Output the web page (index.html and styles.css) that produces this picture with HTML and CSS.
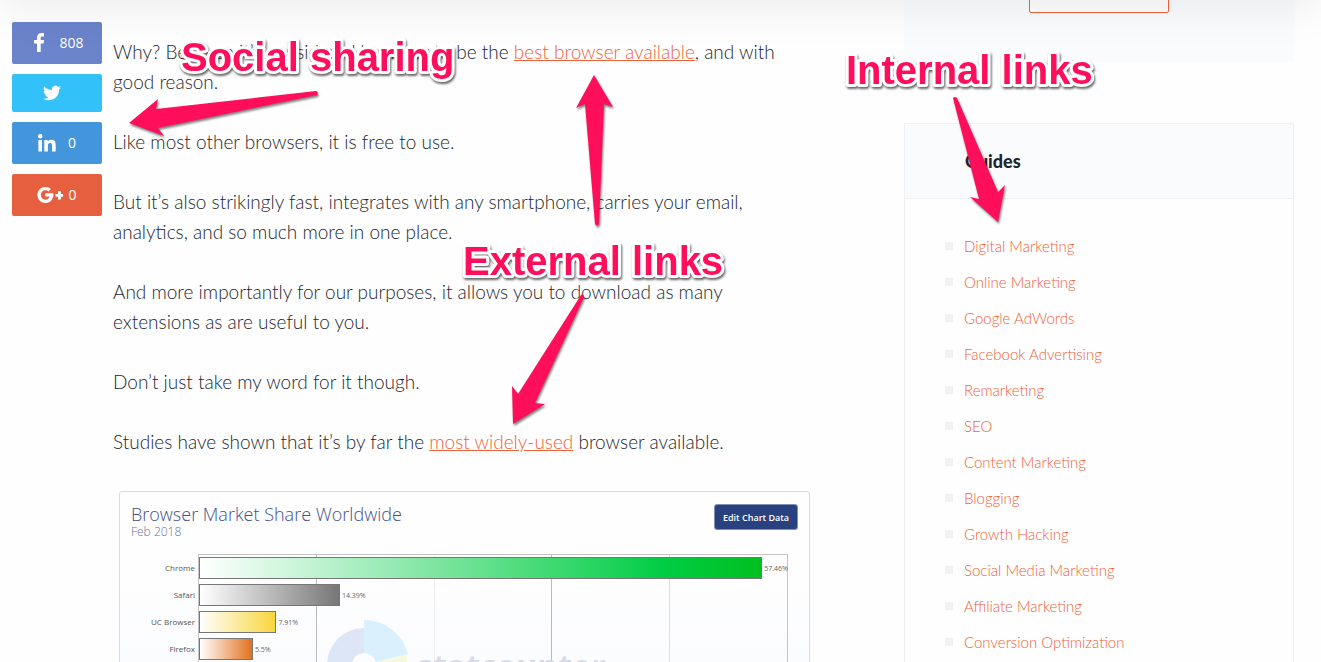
FILE: index.html
```html
<!DOCTYPE html>
<html lang="en">
<head>
    <meta charset="UTF-8">
    <title>Guides</title>
    <link rel="stylesheet" href="styles.css">
</head>
<body>
    <div class="page">
        <header class="topbar"></header>
        <nav class="share" aria-label="Share">
            <a class="share-btn facebook" href="#">
                <svg width="10" height="19" viewBox="0 0 10 19"><path d="M3 19V10.500H0V7H3V4.800C3 1.600 4.700 0 7.600 0H10V3.400H8.300C7 3.400 6.700 4 6.700 5V7H10L9.600 10.500H6.700V19Z"/></svg>
                <span>808</span>
            </a>
            <a class="share-btn twitter" href="#" aria-label="Twitter">
                <svg width="18" height="18" viewBox="0 0 24 24"><path d="M24 4.600a10 10 0 0 1-2.800.8 5 5 0 0 0 2.200-2.700c-1 .6-2 1-3.100 1.200a4.900 4.900 0 0 0-8.400 4.500A14 14 0 0 1 1.700 3.100a4.900 4.900 0 0 0 1.500 6.600 5 5 0 0 1-2.200-.6v.1a4.900 4.900 0 0 0 3.900 4.800 5 5 0 0 1-2.200.1 4.900 4.900 0 0 0 4.600 3.400A9.900 9.900 0 0 1 0 19.500a14 14 0 0 0 7.500 2.200c9.100 0 14.300-7.700 14-14.600A10 10 0 0 0 24 4.600z"/></svg>
            </a>
            <a class="share-btn linkedin" href="#">
                <svg width="18" height="18" viewBox="0 0 18 18"><circle cx="2.200" cy="2.200" r="2.200"/><path d="M.4 6H4V17.500H.4ZM6.300 6H9.700V7.600C10.300 6.500 11.600 5.700 13.300 5.700C17 5.700 17.700 8.100 17.700 11.200V17.500H14V11.900C14 10.500 14 8.900 12.100 8.900C10.200 8.900 9.900 10.300 9.900 11.800V17.500H6.300Z"/></svg>
                <span>0</span>
            </a>
            <a class="share-btn google" href="#">
                <svg width="26" height="18" viewBox="0 0 26 18"><path d="M8.500 7.300H16.300C17 12.500 14 17 8.500 17C4 17 .4 13.500 .4 9C.4 4.500 4 1 8.500 1C10.700 1 12.500 1.800 13.900 3.100L11.500 5.400C10.700 4.700 9.800 4.300 8.500 4.300C5.900 4.300 3.900 6.400 3.900 9C3.900 11.600 5.900 13.700 8.500 13.700C10.800 13.700 12.200 12.400 12.600 10.500H8.500ZM21 5.300H23.800V8H26V10.800H23.800V13.500H21V10.800H18.500V8H21Z"/></svg>
                <span>0</span>
            </a>
        </nav>
        <main class="article">
            <p>Why? Because it’s considered by many to be the <a href="#">best browser available</a>, and with good reason.</p>
            <p>Like most other browsers, it is free to use.</p>
            <p>But it’s also strikingly fast, integrates with any smartphone, carries your email, analytics, and so much more in one place.</p>
            <p>And more importantly for our purposes, it allows you to download as many extensions as are useful to you.</p>
            <p>Don’t just take my word for it though.</p>
            <p>Studies have shown that it’s by far the <a href="#">most widely-used</a> browser available.</p>
            <figure class="chart">
                <div class="chart-head">
                    <div>
                        <h2>Browser Market Share Worldwide</h2>
                        <div class="date">Feb 2018</div>
                    </div>
                    <button type="button">Edit Chart Data</button>
                </div>
                <div class="chart-body">
                    <div class="labels">
                        <span>Chrome</span>
                        <span>Safari</span>
                        <span>UC Browser</span>
                        <span>Firefox</span>
                    </div>
                    <div class="plot">
                        <div class="watermark">
                            <svg width="90" height="90" viewBox="-45 -45 90 90">
                                <path fill="#dce6f6" d="M0 0V-37A37 37 0 0 0 0 37Z"/>
                                <path fill="#daf1fd" d="M0 0V-45A45 45 0 0 1 44 -11Z"/>
                                <path fill="#f6f8dc" d="M0 0L42 -10A43 43 0 0 1 0 43Z"/>
                                <circle r="12" fill="#fcfdff"/>
                            </svg>
                            <span>statcounter</span>
                        </div>
                        <div class="row"><div class="bar chrome" style="width:95.77%"></div><span>57.46%</span></div>
                        <div class="row"><div class="bar safari" style="width:23.98%"></div><span>14.39%</span></div>
                        <div class="row"><div class="bar uc" style="width:13.18%"></div><span>7.91%</span></div>
                        <div class="row"><div class="bar firefox" style="width:9.17%"></div><span>5.5%</span></div>
                    </div>
                </div>
            </figure>
        </main>
        <aside class="sidebar">
            <div class="promo"><a href="#" aria-label="Read more"></a></div>
            <section class="guides">
                <h3>Guides</h3>
                <ul>
                    <li><a href="#">Digital Marketing</a></li>
                    <li><a href="#">Online Marketing</a></li>
                    <li><a href="#">Google AdWords</a></li>
                    <li><a href="#">Facebook Advertising</a></li>
                    <li><a href="#">Remarketing</a></li>
                    <li><a href="#">SEO</a></li>
                    <li><a href="#">Content Marketing</a></li>
                    <li><a href="#">Blogging</a></li>
                    <li><a href="#">Growth Hacking</a></li>
                    <li><a href="#">Social Media Marketing</a></li>
                    <li><a href="#">Affiliate Marketing</a></li>
                    <li><a href="#">Conversion Optimization</a></li>
                </ul>
            </section>
        </aside>
        <!-- callouts drawn over the page -->
        <svg class="notes" width="1321" height="662" viewBox="0 0 1321 662">
            <g class="arrows">
                <path d="M129 123L158 99L156 109L316 91Q319 92 317 95L158 128L164 136Z"/>
                <path d="M594 75L613 107L604 104L599 224Q597 227 595 224L585 104L576 108Z"/>
                <path d="M581 295Q584 293 584 297L535 403L545 404L513 424L512 386L518 394Z"/>
                <path d="M953 98Q955 96 957 98L998 192L1005 185L998 222L970 197L979 199Z"/>
            </g>
            <g class="captions">
                <text x="181" y="71">Social sharing</text>
                <text x="463" y="275">External links</text>
                <text x="846" y="84">Internal links</text>
            </g>
        </svg>
    </div>
</body>
</html>
```
FILE: styles.css
```css
*{
    box-sizing: border-box;
    margin: 0;
    padding: 0;
}
body{
    background: #fefefe;
    font-family: Lato, sans-serif;
    font-weight: 300;
    color: #23262d;
}
a{
    color: #f0623a;
}
.page{
    position: relative;
    display: flex;
    align-items: flex-start;
    height: 100vh;
    padding: 0 27px 0 12px;
    overflow: hidden;
}
.topbar{
    position: absolute;
    z-index: 2;
    top: -40px;
    left: 0;
    right: 0;
    height: 40px;
    box-shadow: 0 0 50px rgba(0,0,0,.1);
}

/* share buttons */
.share{
    display: flex;
    flex-direction: column;
    gap: 10px;
    width: 90px;
    margin: 22px 11px 0 0;
}
.share-btn{
    display: flex;
    align-items: center;
    justify-content: center;
    height: 42px;
    padding-bottom: 1px;
    border-radius: 2px;
    color: #fff;
    font-family: "Open Sans", sans-serif;
    font-size: 14px;
    font-weight: 400;
    line-height: 18px;
    text-decoration: none;
}
.share-btn svg{
    fill: #fff;
}
.facebook{
    gap: 15px;
    padding-left: 4px;
    background: #6a83cb;
}
.twitter{
    height: 38px;
    padding-right: 11px;
    background: #33c1f9;
}
.linkedin{
    gap: 12px;
    background: #4396dc;
}
.google{
    gap: 5px;
    background: #e65f3e;
}

/* article */
.article{
    flex: 1;
    min-width: 0;
    padding: 37px 90px 0 0;
}
.article p{
    margin-bottom: 30px;
    font-size: 19px;
    line-height: 30px;
}
.chart{
    height: 400px;
    margin: 34px 4px 0 6px;
    padding: 12px 11px 0;
    border: 1px solid #cfdfef;
    border-radius: 3px;
    background: linear-gradient(#fefefe, #fefefe 80px, #fafbff 200px);
    font-family: "Open Sans", sans-serif;
}
.chart-head{
    display: flex;
    justify-content: space-between;
    align-items: flex-start;
    height: 50px;
}
.chart-head h2{
    color: #43508c;
    font-size: 18px;
    font-weight: 300;
    line-height: 20px;
}
.date{
    color: #6a7199;
    font-size: 12px;
    line-height: 16px;
}
.chart-head button{
    width: 84px;
    height: 26px;
    border: 1px solid #8290b8;
    border-radius: 3px;
    background: #29417f;
    color: #fff;
    font-family: "Open Sans", sans-serif;
    font-size: 9px;
    font-weight: 600;
}
.chart-body{
    display: flex;
    height: 320px;
}
.labels{
    display: flex;
    flex-direction: column;
    gap: 5px;
    width: 67px;
    padding: 3px 3px 0 0;
    color: #555;
    font-size: 8px;
    font-weight: 400;
    line-height: 22px;
    text-align: right;
}
.plot{
    position: relative;
    display: flex;
    flex: 1;
    flex-direction: column;
    gap: 5px;
    margin-right: 10px;
    padding-top: 2px;
    border: 1px solid #c4c4c4;
    background:
        linear-gradient(#bbb, #bbb) 20% 0 / 1px 100% no-repeat,
        linear-gradient(#eee, #eee) 40% 0 / 1px 100% no-repeat,
        linear-gradient(#bbb, #bbb) 60% 0 / 1px 100% no-repeat,
        linear-gradient(#ddd, #ddd) 80% 0 / 1px 100% no-repeat;
}
.row{
    position: relative;
    display: flex;
    align-items: center;
    height: 22px;
}
.row span{
    margin-left: 2px;
    color: #666;
    font-size: 7px;
    font-weight: 400;
}
.bar{
    flex: none;
    height: 22px;
    border: 1px solid #777;
}
.chrome{
    background: linear-gradient(90deg, #fff, #00cc44 83%, #00c020);
}
.safari{
    background: linear-gradient(90deg, #fff, #777);
}
.uc{
    background: linear-gradient(90deg, #fff, #f8d63c);
}
.firefox{
    background: linear-gradient(90deg, #fff, #e2711d);
}
.watermark{
    position: absolute;
    top: 65px;
    left: 120px;
    display: flex;
    align-items: center;
    gap: 8px;
    color: #d9dce6;
    font-size: 32px;
    font-weight: 700;
}

/* sidebar */
.sidebar{
    width: 390px;
}
.promo{
    display: flex;
    justify-content: center;
    height: 62px;
    margin-bottom: 61px;
    background: #fafbfd;
}
.promo a{
    width: 140px;
    height: 43px;
    margin-top: -30px;
    border: 1px solid #f0623a;
    border-radius: 2px;
    background: #fdfdfd;
}
.guides{
    height: 700px;
    border: 1px solid #eff0f2;
}
.guides h3{
    padding: 0 60px;
    border-bottom: 1px solid #eff0f2;
    background: #fafbfd;
    font-size: 18px;
    font-weight: 900;
    line-height: 74px;
}
.guides ul{
    padding: 29px 40px;
    list-style: none;
}
.guides li{
    display: flex;
    align-items: center;
    gap: 11px;
    font-size: 15px;
    line-height: 36px;
}
.guides li::before{
    content: "";
    width: 8px;
    height: 8px;
    background: #f1f1f1;
}
.guides a{
    text-decoration: none;
}

/* callouts */
.notes{
    position: absolute;
    z-index: 3;
    top: 0;
    left: 0;
    pointer-events: none;
}
.arrows{
    fill: #ff0f5b;
    filter: drop-shadow(1px 2px 1px rgba(0,0,0,.5));
}
.captions{
    fill: #ff0f5b;
    stroke: #fff;
    stroke-width: 6px;
    stroke-linejoin: round;
    paint-order: stroke;
    font-family: "Liberation Sans", sans-serif;
    font-size: 40px;
    font-weight: 700;
    filter: drop-shadow(1px 2px 1px rgba(0,0,0,.6));
}
```
